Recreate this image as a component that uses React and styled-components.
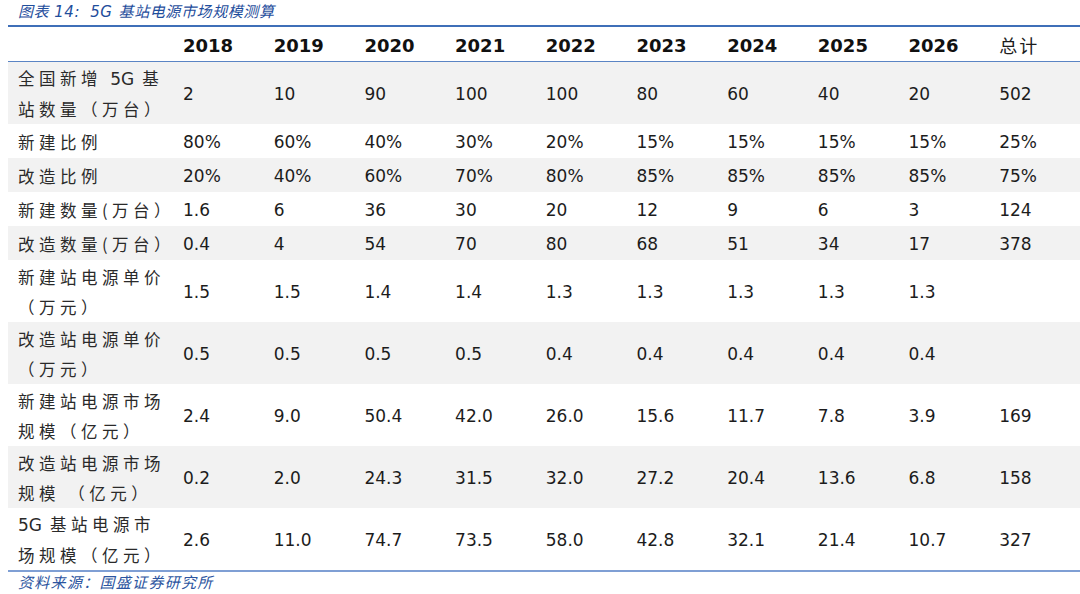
import React from "react";
import styled, { createGlobalStyle } from "styled-components";

/* ================= GLOBAL ================= */

const GlobalStyle = createGlobalStyle`
  html, body {
    margin: 0;
    padding: 0;
    background: #ffffff;
  }
  body {
    font-family: "DejaVu Sans", "Noto Sans CJK SC", sans-serif;
    color: #1c1c1c;
  }
`;

/* ================= LAYOUT ================= */

const Page = styled.div`
  width: 1080px;
  height: 594px;
  overflow: hidden;
  display: flex;
  flex-direction: column;
`;

const Caption = styled.div`
  height: 25px;
  padding-left: 18px;
  box-sizing: border-box;
  display: flex;
  align-items: center;
  font-family: "DejaVu Sans", "Noto Sans CJK SC", sans-serif;
  font-style: italic;
  font-size: 15px;
  line-height: 23px;
  letter-spacing: 0.6px;
  color: #1f4e9c;
  white-space: pre;
`;

const CaptionPart = styled.span`
  margin-right: ${({ $gap }) => $gap}px;
`;

const Table = styled.div`
  margin-left: 8px;
  border-top: 2px solid #3f6fb8;
  border-bottom: 2px solid #7f9fd4;
  display: grid;
  grid-template-columns: 172px repeat(9, 90.7px) 1fr;
`;

const Row = styled.div`
  display: contents;
`;

const Cell = styled.div`
  height: ${({ $h }) => $h}px;
  display: flex;
  align-items: center;
  padding: 2px 0 0 3px;
  background: ${({ $shade }) => ($shade ? "#f2f2f2" : "#ffffff")};
  border-bottom: ${({ $head }) => ($head ? "1px solid #5b84c4" : "none")};
  box-sizing: border-box;
  font-size: 17px;
  white-space: nowrap;
  color: #1c1c1c;
`;

const HeadCell = styled(Cell)`
  font-weight: 700;
  font-size: 18px;
  color: #111;
`;

const HeadCjk = styled(Cell)`
  font-family: "Noto Sans CJK SC", sans-serif;
  font-size: 18px;
  letter-spacing: 2px;
`;

const Label = styled(Cell)`
  padding: 1px 0 0 10px;
  flex-direction: column;
  align-items: flex-start;
  justify-content: center;
  font-family: "Noto Sans CJK SC", sans-serif;
  font-size: 16.5px;
  letter-spacing: 4.5px;
  line-height: 30px;
  color: #2a2a2a;
`;

const Latin = styled.span`
  font-family: "DejaVu Sans", sans-serif;
  font-size: 17px;
  letter-spacing: 0;
  margin-right: 8px;
`;

const Source = styled.div`
  padding: 0 0 0 18px;
  font-family: "Noto Sans CJK SC", sans-serif;
  font-style: italic;
  font-size: 15px;
  letter-spacing: 1.3px;
  line-height: 20px;
  color: #2c55a0;
`;

/* ================= DATA ================= */

const years = ["2018", "2019", "2020", "2021", "2022", "2023", "2024", "2025", "2026"];

const rows = [
  {
    label: [<><span>全国新增 </span><Latin>5G</Latin><span>基</span></>, "站数量（万台）"],
    h: 62,
    values: ["2", "10", "90", "100", "100", "80", "60", "40", "20", "502"],
  },
  { label: ["新建比例"], h: 34, values: ["80%", "60%", "40%", "30%", "20%", "15%", "15%", "15%", "15%", "25%"] },
  { label: ["改造比例"], h: 34, values: ["20%", "40%", "60%", "70%", "80%", "85%", "85%", "85%", "85%", "75%"] },
  { label: ["新建数量(万台）"], h: 34, values: ["1.6", "6", "36", "30", "20", "12", "9", "6", "3", "124"] },
  { label: ["改造数量(万台）"], h: 34, values: ["0.4", "4", "54", "70", "80", "68", "51", "34", "17", "378"] },
  { label: ["新建站电源单价", "（万元）"], h: 62, values: ["1.5", "1.5", "1.4", "1.4", "1.3", "1.3", "1.3", "1.3", "1.3", ""] },
  { label: ["改造站电源单价", "（万元）"], h: 62, values: ["0.5", "0.5", "0.5", "0.5", "0.4", "0.4", "0.4", "0.4", "0.4", ""] },
  { label: ["新建站电源市场", "规模（亿元）"], h: 62, values: ["2.4", "9.0", "50.4", "42.0", "26.0", "15.6", "11.7", "7.8", "3.9", "169"] },
  { label: ["改造站电源市场", "规模 （亿元）"], h: 62, values: ["0.2", "2.0", "24.3", "31.5", "32.0", "27.2", "20.4", "13.6", "6.8", "158"] },
  {
    label: [<><Latin>5G</Latin><span>基站电源市</span></>, "场规模（亿元）"],
    h: 62,
    values: ["2.6", "11.0", "74.7", "73.5", "58.0", "42.8", "32.1", "21.4", "10.7", "327"],
  },
];

/* ================= COMPONENT ================= */

const App = () => {
  return (
    <Page>
      <GlobalStyle />
      <Caption>
        <CaptionPart $gap={5}>图表</CaptionPart>
        <CaptionPart $gap={10}>14:</CaptionPart>
        <CaptionPart $gap={6}>5G</CaptionPart>
        <span>基站电源市场规模测算</span>
      </Caption>

      <Table>
        <Row>
          <Cell $h={35} $head />
          {years.map((y) => (
            <HeadCell key={y} $h={35} $head>
              {y}
            </HeadCell>
          ))}
          <HeadCjk $h={35} $head>总计</HeadCjk>
        </Row>

        {rows.map((row, i) => {
          const shade = i % 2 === 0;
          return (
            <Row key={i}>
              <Label $h={row.h} $shade={shade}>
                {row.label.map((line, j) => (
                  <div key={j}>{line}</div>
                ))}
              </Label>
              {row.values.map((v, j) => (
                <Cell key={j} $h={row.h} $shade={shade}>
                  {v}
                </Cell>
              ))}
            </Row>
          );
        })}
      </Table>

      <Source>资料来源：国盛证券研究所</Source>
    </Page>
  );
};

export default App;
